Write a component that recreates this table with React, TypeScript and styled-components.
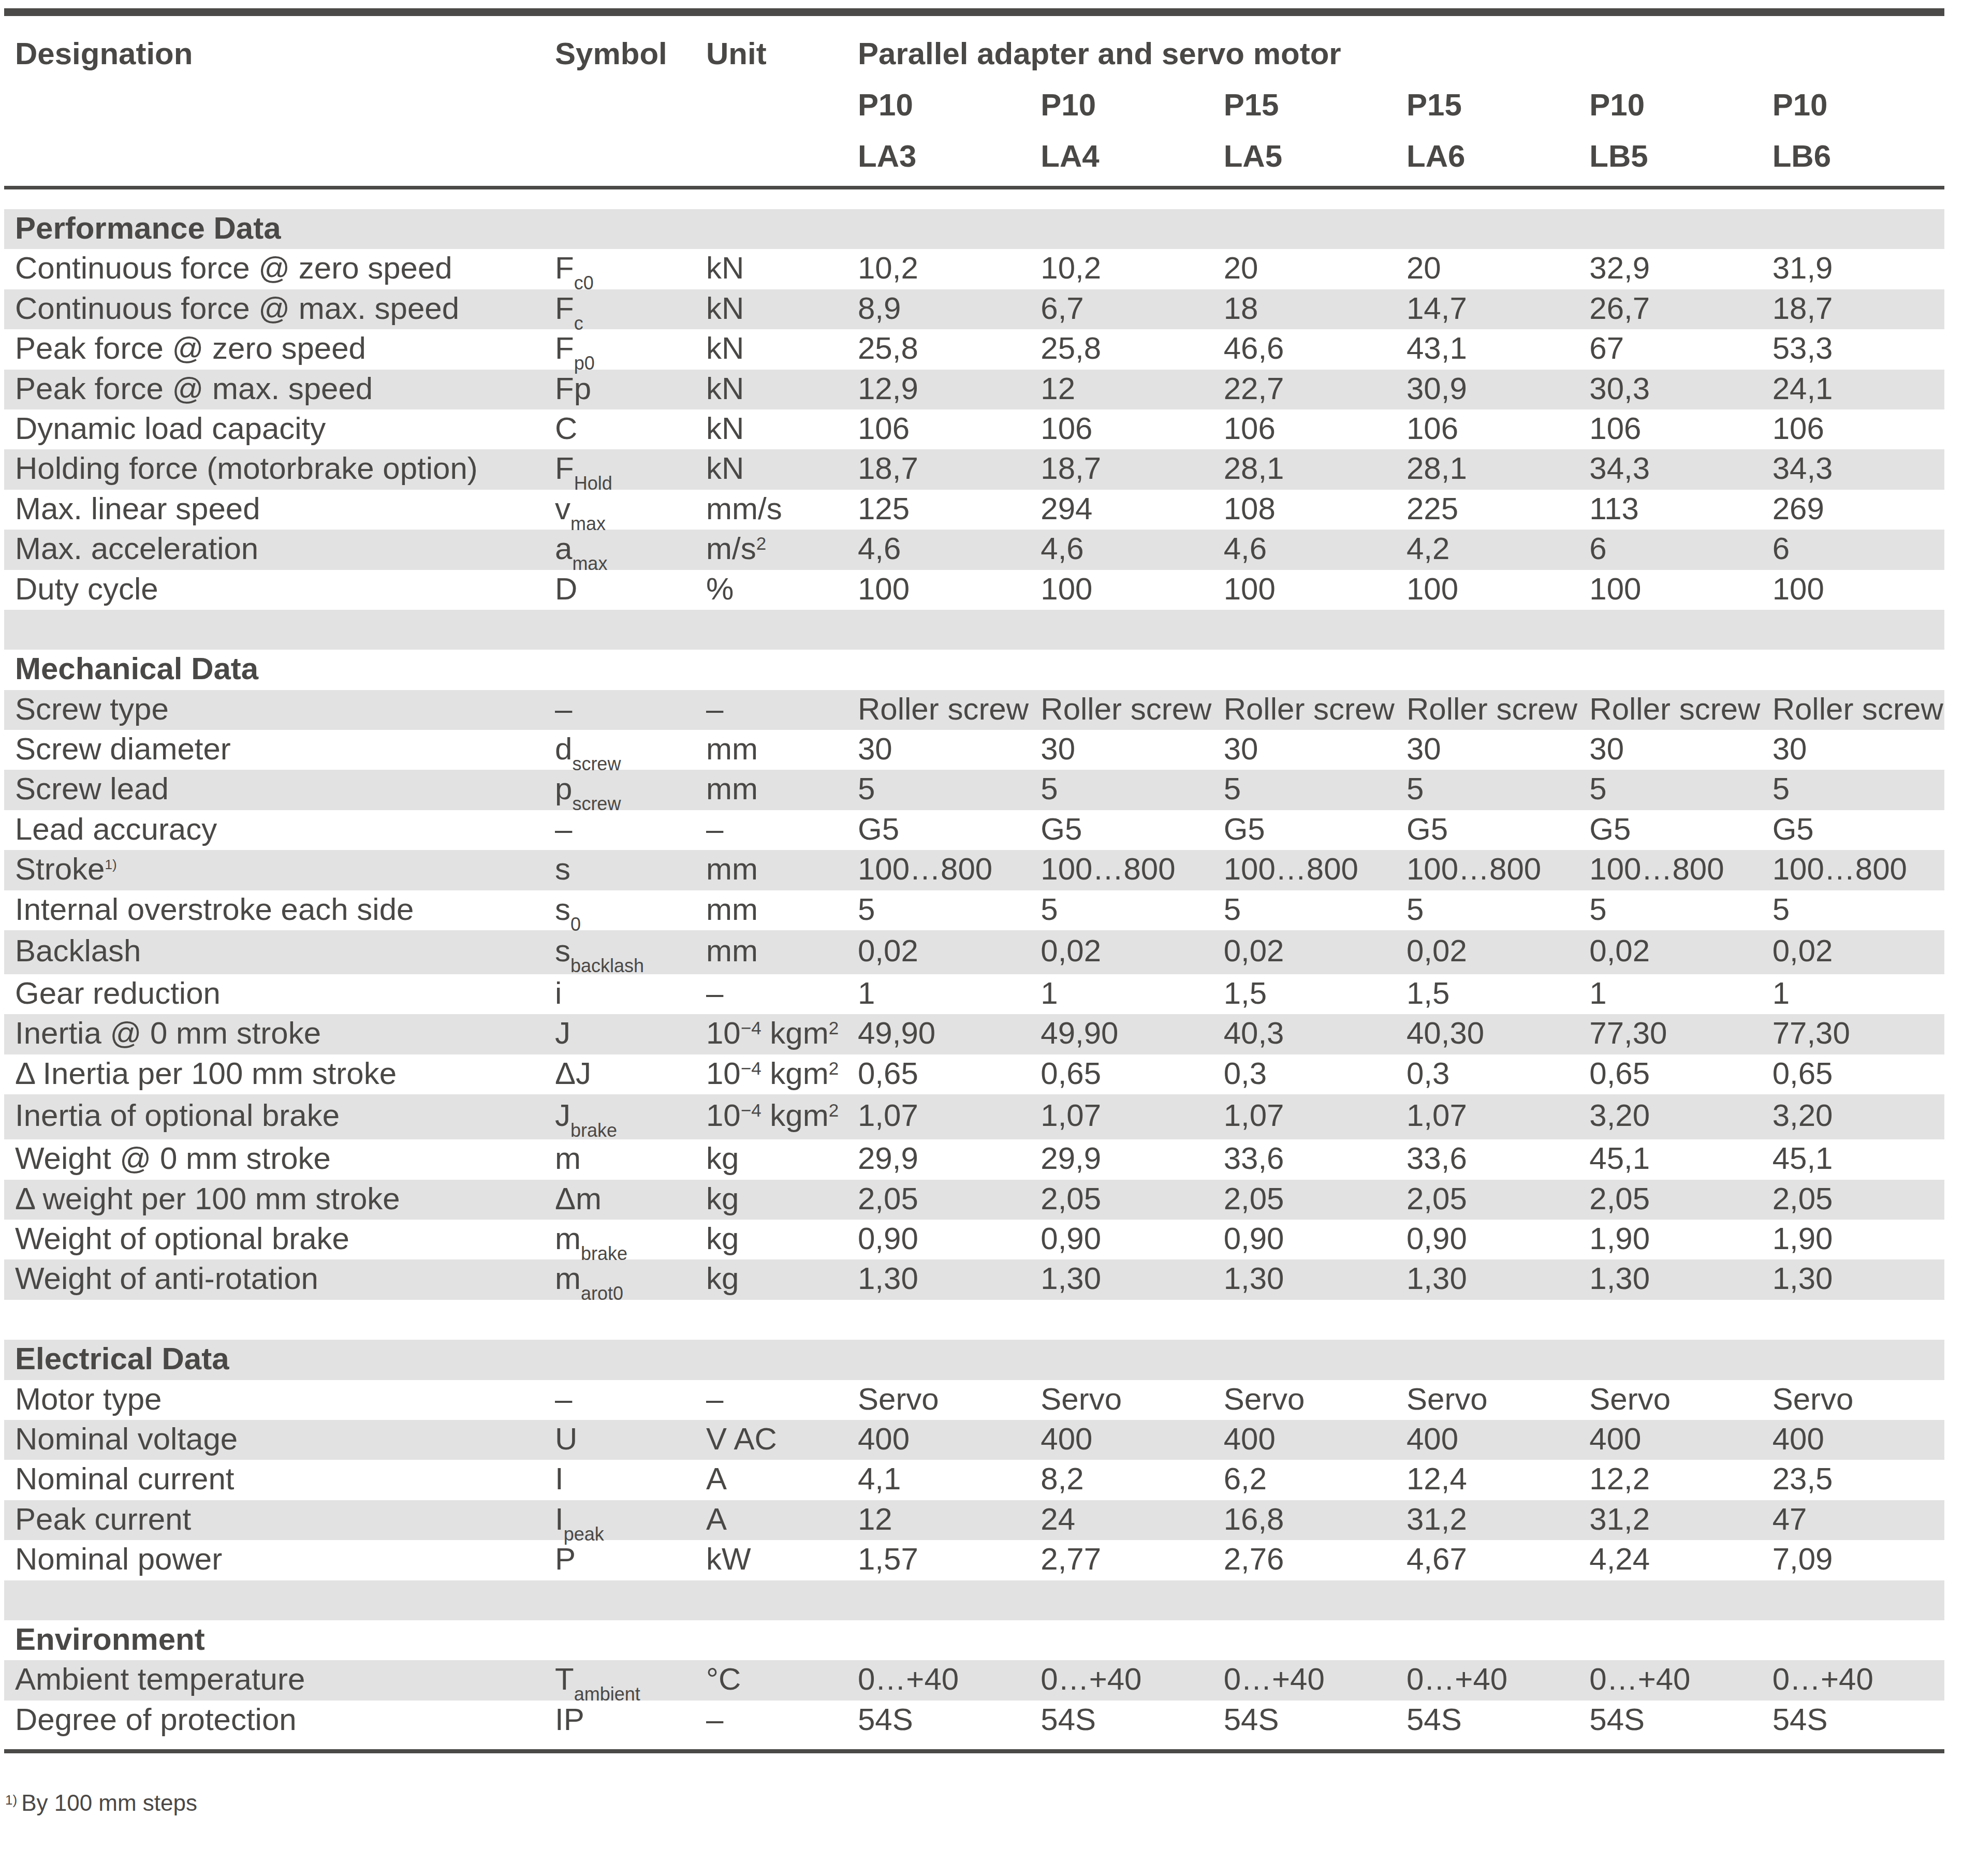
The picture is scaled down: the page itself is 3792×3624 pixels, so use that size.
import React from 'react'
import styled, { createGlobalStyle } from 'styled-components'

const ink = '#4a4846'
const band = '#e2e2e2'
const cols = '1043px 292px 293px repeat(6, 1fr)'

const GlobalStyle = createGlobalStyle`
  body {
    margin: 8px;
    background: #ffffff;
    color: ${ink};
    font-family: 'Liberation Sans', Arial, Helvetica, sans-serif;
  }
`

const Sheet = styled.div`
  width: 3748px;
  margin-top: 8px;
  font-size: 60px;
`

const Rule = styled.div<{ $thick: number; $above?: number; $below?: number }>`
  height: ${(p) => p.$thick}px;
  background: #4b4a48;
  margin-top: ${(p) => p.$above || 0}px;
  margin-bottom: ${(p) => p.$below || 0}px;
`

const HeadGrid = styled.div`
  display: grid;
  grid-template-columns: ${cols};
  padding: 23px 0 8px;
  font-weight: 700;
  line-height: 99px;
`

const Cell = styled.div<{ $span?: number }>`
  padding-left: 21px;
  white-space: nowrap;
  grid-column: span ${(p) => p.$span || 1};
`

const Row = styled.div<{ $shade: boolean; $h: number; $pt: number }>`
  display: grid;
  grid-template-columns: ${cols};
  box-sizing: border-box;
  height: ${(p) => p.$h}px;
  padding-top: ${(p) => p.$pt}px;
  line-height: 69px;
  background: ${(p) => (p.$shade ? band : 'transparent')};
`

const Section = styled(Cell)`
  font-weight: 700;
`

// subscript / superscript of a symbol or unit
const Sub = styled.span`
  font-size: 36px;
  line-height: 0;
  vertical-align: -21px;
`

const Sup = styled.span<{ $size?: number; $raise?: number }>`
  font-size: ${(p) => p.$size || 35}px;
  line-height: 0;
  vertical-align: ${(p) => p.$raise || 18}px;
`

const Footnote = styled.div`
  margin-top: 70px;
  padding-left: 2px;
  font-size: 44px;
  line-height: 51px;
`

const NoteMark = styled(Sup)`
  margin-right: 8px;
`

type Line =
  | { kind: 'section'; label: string }
  | { kind: 'blank' }
  | {
      kind: 'data'
      label: React.ReactNode
      sym: React.ReactNode
      unit: React.ReactNode
      vals: string[]
      h?: number
      pt?: number
    }

const same = (v: string) => [v, v, v, v, v, v]
const s = (main: string, sub: string) => (
  <>
    {main}
    <Sub>{sub}</Sub>
  </>
)
const inertiaUnit = (
  <>
    10<Sup>−4</Sup> kgm<Sup>2</Sup>
  </>
)

const lines: Line[] = [
  { kind: 'section', label: 'Performance Data' },
  { kind: 'data', label: 'Continuous force @ zero speed', sym: s('F', 'c0'), unit: 'kN', vals: ['10,2', '10,2', '20', '20', '32,9', '31,9'] },
  { kind: 'data', label: 'Continuous force @ max. speed', sym: s('F', 'c'), unit: 'kN', vals: ['8,9', '6,7', '18', '14,7', '26,7', '18,7'] },
  { kind: 'data', label: 'Peak force @ zero speed', sym: s('F', 'p0'), unit: 'kN', vals: ['25,8', '25,8', '46,6', '43,1', '67', '53,3'] },
  { kind: 'data', label: 'Peak force @ max. speed', sym: 'Fp', unit: 'kN', vals: ['12,9', '12', '22,7', '30,9', '30,3', '24,1'] },
  { kind: 'data', label: 'Dynamic load capacity', sym: 'C', unit: 'kN', vals: same('106') },
  { kind: 'data', label: 'Holding force (motorbrake option)', sym: s('F', 'Hold'), unit: 'kN', vals: ['18,7', '18,7', '28,1', '28,1', '34,3', '34,3'] },
  { kind: 'data', label: 'Max. linear speed', sym: s('v', 'max'), unit: 'mm/s', vals: ['125', '294', '108', '225', '113', '269'] },
  {
    kind: 'data',
    label: 'Max. acceleration',
    sym: s('a', 'max'),
    unit: (
      <>
        m/s<Sup>2</Sup>
      </>
    ),
    vals: ['4,6', '4,6', '4,6', '4,2', '6', '6'],
  },
  { kind: 'data', label: 'Duty cycle', sym: 'D', unit: '%', vals: same('100') },
  { kind: 'blank' },
  { kind: 'section', label: 'Mechanical Data' },
  { kind: 'data', label: 'Screw type', sym: '–', unit: '–', vals: same('Roller screw') },
  { kind: 'data', label: 'Screw diameter', sym: s('d', 'screw'), unit: 'mm', vals: same('30') },
  { kind: 'data', label: 'Screw lead', sym: s('p', 'screw'), unit: 'mm', vals: same('5') },
  { kind: 'data', label: 'Lead accuracy', sym: '–', unit: '–', vals: same('G5') },
  {
    kind: 'data',
    label: (
      <>
        Stroke
        <Sup $size={26} $raise={20}>
          1)
        </Sup>
      </>
    ),
    sym: 's',
    unit: 'mm',
    vals: same('100…800'),
  },
  { kind: 'data', label: 'Internal overstroke each side', sym: s('s', '0'), unit: 'mm', vals: same('5') },
  { kind: 'data', label: 'Backlash', sym: s('s', 'backlash'), unit: 'mm', vals: same('0,02'), h: 85, pt: 5 },
  { kind: 'data', label: 'Gear reduction', sym: 'i', unit: '–', vals: ['1', '1', '1,5', '1,5', '1', '1'] },
  { kind: 'data', label: 'Inertia @ 0 mm stroke', sym: 'J', unit: inertiaUnit, vals: ['49,90', '49,90', '40,3', '40,30', '77,30', '77,30'] },
  { kind: 'data', label: 'Δ Inertia per 100 mm stroke', sym: 'ΔJ', unit: inertiaUnit, vals: ['0,65', '0,65', '0,3', '0,3', '0,65', '0,65'] },
  { kind: 'data', label: 'Inertia of optional brake', sym: s('J', 'brake'), unit: inertiaUnit, vals: ['1,07', '1,07', '1,07', '1,07', '3,20', '3,20'], h: 87, pt: 6 },
  { kind: 'data', label: 'Weight @ 0 mm stroke', sym: 'm', unit: 'kg', vals: ['29,9', '29,9', '33,6', '33,6', '45,1', '45,1'] },
  { kind: 'data', label: 'Δ weight per 100 mm stroke', sym: 'Δm', unit: 'kg', vals: same('2,05') },
  { kind: 'data', label: 'Weight of optional brake', sym: s('m', 'brake'), unit: 'kg', vals: ['0,90', '0,90', '0,90', '0,90', '1,90', '1,90'] },
  { kind: 'data', label: 'Weight of anti-rotation', sym: s('m', 'arot0'), unit: 'kg', vals: same('1,30') },
  { kind: 'blank' },
  { kind: 'section', label: 'Electrical Data' },
  { kind: 'data', label: 'Motor type', sym: '–', unit: '–', vals: same('Servo') },
  { kind: 'data', label: 'Nominal voltage', sym: 'U', unit: 'V AC', vals: same('400') },
  { kind: 'data', label: 'Nominal current', sym: 'I', unit: 'A', vals: ['4,1', '8,2', '6,2', '12,4', '12,2', '23,5'] },
  { kind: 'data', label: 'Peak current', sym: s('I', 'peak'), unit: 'A', vals: ['12', '24', '16,8', '31,2', '31,2', '47'] },
  { kind: 'data', label: 'Nominal power', sym: 'P', unit: 'kW', vals: ['1,57', '2,77', '2,76', '4,67', '4,24', '7,09'] },
  { kind: 'blank' },
  { kind: 'section', label: 'Environment' },
  { kind: 'data', label: 'Ambient temperature', sym: s('T', 'ambient'), unit: '°C', vals: same('0…+40') },
  { kind: 'data', label: 'Degree of protection', sym: 'IP', unit: '–', vals: same('54S') },
]

const models = [
  ['P10', 'LA3'],
  ['P10', 'LA4'],
  ['P15', 'LA5'],
  ['P15', 'LA6'],
  ['P10', 'LB5'],
  ['P10', 'LB6'],
]

export default function App() {
  return (
    <>
      <GlobalStyle />
      <Sheet>
        <Rule $thick={15} />
        <HeadGrid>
          <Cell>Designation</Cell>
          <Cell>Symbol</Cell>
          <Cell>Unit</Cell>
          <Cell $span={6}>Parallel adapter and servo motor</Cell>
          <Cell $span={3} />
          {models.map(([a], i) => (
            <Cell key={'a' + i}>{a}</Cell>
          ))}
          <Cell $span={3} />
          {models.map(([, b], i) => (
            <Cell key={'b' + i}>{b}</Cell>
          ))}
        </HeadGrid>
        <Rule $thick={7} $below={38} />
        {lines.map((ln, i) => {
          const shade = i % 2 === 0
          if (ln.kind === 'section')
            return (
              <Row key={i} $shade={shade} $h={77.4} $pt={2}>
                <Section $span={9}>{ln.label}</Section>
              </Row>
            )
          if (ln.kind === 'blank') return <Row key={i} $shade={shade} $h={77.4} $pt={2} />
          return (
            <Row key={i} $shade={shade} $h={ln.h || 77.4} $pt={ln.pt || 2}>
              <Cell>{ln.label}</Cell>
              <Cell>{ln.sym}</Cell>
              <Cell>{ln.unit}</Cell>
              {ln.vals.map((v, j) => (
                <Cell key={j}>{v}</Cell>
              ))}
            </Row>
          )
        })}
        <Rule $thick={8} $above={17} />
        <Footnote>
          <NoteMark $size={26} $raise={12}>
            1)
          </NoteMark>
          By 100 mm steps
        </Footnote>
      </Sheet>
    </>
  )
}
